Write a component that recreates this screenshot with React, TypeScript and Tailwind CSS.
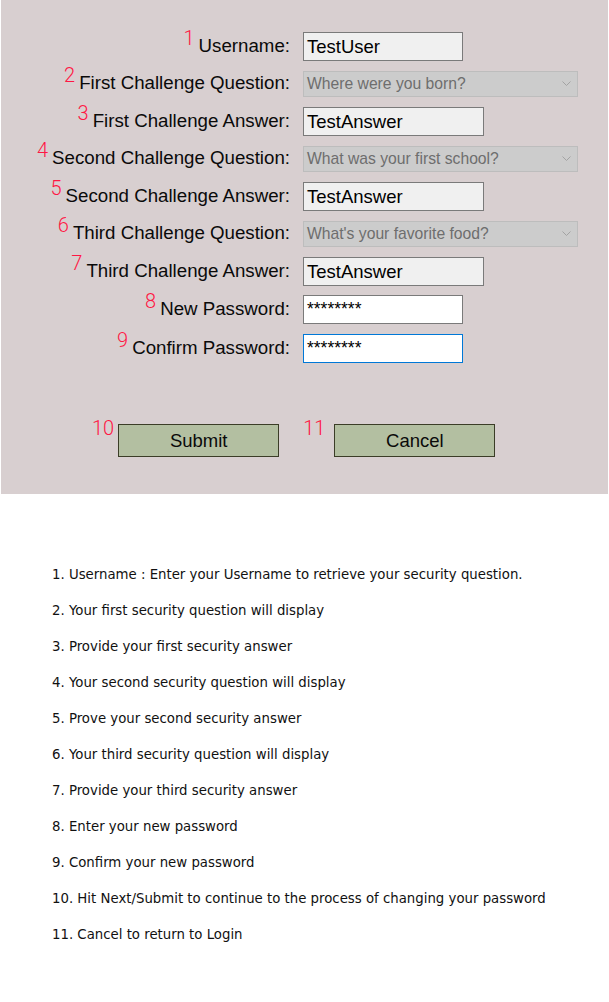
import React from "react";

const rows: { n: string; label: string; kind: "input" | "answer" | "combo" | "pwd" | "pwdFocus"; value: string; h: string }[] = [
  { n: "1", label: "Username:", kind: "input", value: "TestUser", h: "h-[38px]" },
  { n: "2", label: "First Challenge Question:", kind: "combo", value: "Where were you born?", h: "h-[37px]" },
  { n: "3", label: "First Challenge Answer:", kind: "answer", value: "TestAnswer", h: "h-[38px]" },
  { n: "4", label: "Second Challenge Question:", kind: "combo", value: "What was your first school?", h: "h-[37px]" },
  { n: "5", label: "Second Challenge Answer:", kind: "answer", value: "TestAnswer", h: "h-[38px]" },
  { n: "6", label: "Third Challenge Question:", kind: "combo", value: "What's your favorite food?", h: "h-[37px]" },
  { n: "7", label: "Third Challenge Answer:", kind: "answer", value: "TestAnswer", h: "h-[38px]" },
  { n: "8", label: "New Password:", kind: "pwd", value: "********", h: "h-[39px]" },
  { n: "9", label: "Confirm Password:", kind: "pwdFocus", value: "********", h: "h-[39px]" },
];

const notes = [
  "1. Username : Enter your Username to retrieve your security question.",
  "2. Your first security question will display",
  "3. Provide your first security answer",
  "4. Your second security question will display",
  "5. Prove your second security answer",
  "6. Your third security question will display",
  "7. Provide your third security answer",
  "8. Enter your new password",
  "9. Confirm your new password",
  "10. Hit Next/Submit to continue to the process of changing your password",
  "11. Cancel to return to Login",
];

function Field({ kind, value }: { kind: string; value: string }) {
  if (kind === "combo") {
    return (
      <div className="flex h-[26px] w-[275px] items-center justify-between border border-[#bdbdbd] bg-[#cccccc] pl-[3px] pr-[5px] text-[15.7px] text-[#6e6e6e]">
        <span>{value}</span>
        <svg width="9" height="6" viewBox="0 0 9 6" className="mr-[1px]">
          <polyline points="0.5,0.5 4.5,4.5 8.5,0.5" fill="none" stroke="#a3a3a3" strokeWidth="1" />
        </svg>
      </div>
    );
  }
  const w = kind === "answer" ? "w-[181px]" : "w-[160px]";
  const bg = kind === "pwd" || kind === "pwdFocus" ? "bg-white" : "bg-[#f0f0f0]";
  const border = kind === "pwdFocus" ? "border-[#0078d7]" : "border-[#7a7a7a]";
  return (
    <div className={`flex h-[29px] ${w} items-center border ${border} ${bg} pl-[3px] text-[18.5px] text-black`}>
      <span className={kind === "pwd" || kind === "pwdFocus" ? "-mt-[1px] text-[17.5px]" : "mt-[1px]"}>{value}</span>
    </div>
  );
}

export default function App() {
  return (
    <div className="min-h-[1002px] w-[609px] bg-white font-['Liberation_Sans',Arial,sans-serif]">
      <div className="ml-px flex h-[494px] w-[607px] flex-col bg-[#d8cfd0] pt-[27px]">
        {rows.map((r) => (
          <div key={r.n} className={`flex ${r.h} items-center`}>
            <div className="flex w-[289px] items-center justify-end">
              <span className="mb-[17px] mr-[4px] font-['Roboto',sans-serif] text-[20px] leading-none font-light text-[#ff1744]">
                {r.n}
              </span>
              <span className="text-[18.7px] leading-none text-[#0a0a0a]">{r.label}</span>
            </div>
            <div className="ml-[13px]">
              <Field kind={r.kind} value={r.value} />
            </div>
          </div>
        ))}
        <div className="mt-[50px] flex items-start pl-[91px]">
          <span className="font-['Roboto',sans-serif] text-[20px] leading-none font-light text-[#ff1744]">10</span>
          <button className="ml-[4px] mt-[6px] h-[33px] w-[161px] border border-[#3b3d27] bg-[#b3bfa1] text-[18.5px] text-[#0a0a0a]">
            Submit
          </button>
          <span className="ml-[24px] font-['Roboto',sans-serif] text-[20px] leading-none font-light text-[#ff1744]">11</span>
          <button className="ml-[9px] mt-[6px] h-[33px] w-[161px] border border-[#3b3d27] bg-[#b3bfa1] text-[18.5px] text-[#0a0a0a]">
            Cancel
          </button>
        </div>
      </div>
      <div className="flex flex-col gap-[18px] pl-[52px] pt-[72px] font-['DejaVu_Sans',sans-serif] text-[13.3px] leading-[18px] text-[#111]">
        {notes.map((t) => (
          <div key={t}>{t}</div>
        ))}
      </div>
    </div>
  );
}
